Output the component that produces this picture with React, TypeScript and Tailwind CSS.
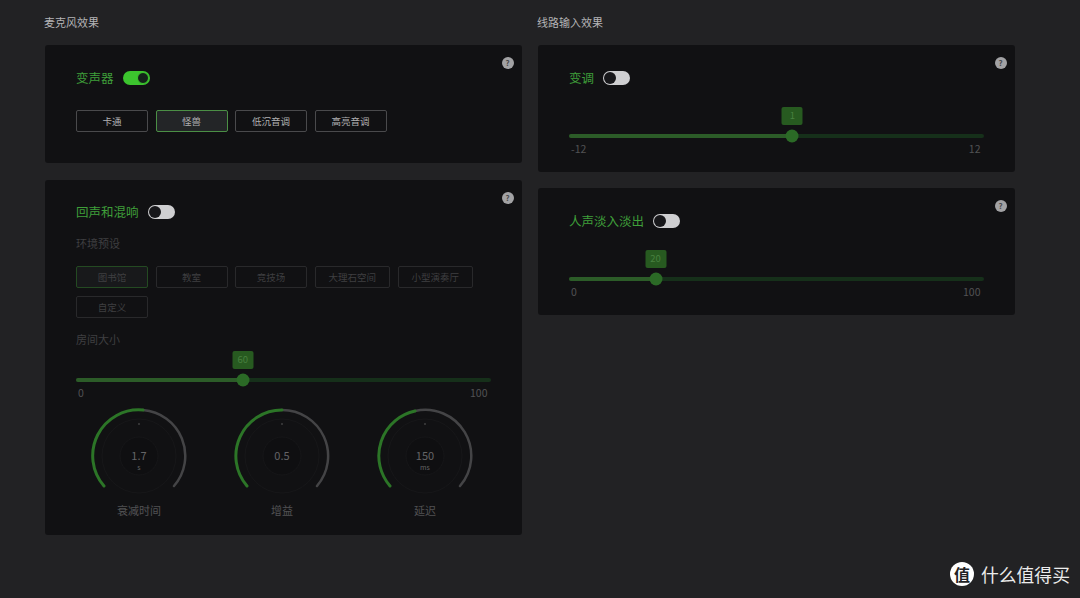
import type { ReactNode } from 'react'

const FONT = 'font-["Noto_Sans_CJK_SC","Noto_Sans",sans-serif]'

function Help() {
  return (
    <span className="absolute right-[8px] top-[12px] flex h-[12px] w-[12px] items-center justify-center rounded-full bg-[#a2a2a4] text-[8px] font-bold leading-none text-[#4a4a4c]">
      ?
    </span>
  )
}

function Toggle({ on = false }: { on?: boolean }) {
  if (on) {
    return (
      <span className="flex h-[14px] w-[27px] items-center justify-end rounded-full bg-[#3cc42e] pr-px">
        <span className="h-[12px] w-[12px] rounded-full border border-[#3cc42e] bg-[#14231a]" />
      </span>
    )
  }
  return (
    <span className="flex h-[14px] w-[27px] items-center rounded-full bg-[#cfcfd1] pl-px">
      <span className="h-[12px] w-[12px] rounded-full bg-[#17171a]" />
    </span>
  )
}

function Title({ text, on }: { text: string; on?: boolean }) {
  return (
    <div className="flex h-[14px] items-center gap-[9px]">
      <span className="text-[12.5px] leading-[14px] text-[#3f9f3a]">{text}</span>
      <Toggle on={on} />
    </div>
  )
}

function Card({ children }: { children: ReactNode }) {
  return <div className="relative rounded-[3px] bg-[#111113] pl-[31.5px] pr-[31px]">{children}</div>
}

function Slider({ value, pct, min, max }: { value: string; pct: number; min: string; max: string }) {
  // the thumb stays inside the track, so its centre runs over width - 14px
  const center = `calc((100% - 14px) * ${pct / 100} + 6.5px)`
  return (
    <div>
      <div className="relative h-[18px]">
        <span
          className="absolute top-0 flex h-[18px] w-[21px] -translate-x-1/2 items-center justify-center rounded-[2px] bg-[#275a20] text-[9.5px] leading-none text-[#47803f]"
          style={{ left: center }}
        >
          {value}
        </span>
      </div>
      <div className="relative mt-[9px] h-[4px] rounded-full bg-[#16301a]">
        <div className="h-full rounded-full bg-[#2c5c28]" style={{ width: center }} />
        <span
          className="absolute top-1/2 h-[13px] w-[13px] -translate-x-1/2 -translate-y-1/2 rounded-full bg-[#2b6a26]"
          style={{ left: center }}
        />
      </div>
      <div className="mt-[5px] flex h-[12px] items-center justify-between pl-[2px] pr-[3px] text-[10.5px] leading-[12px] text-[#525254]">
        <span>{min}</span>
        <span>{max}</span>
      </div>
    </div>
  )
}

function Knob({ value, unit, label, endX, endY }: { value: string; unit?: string; label: string; endX: number; endY: number }) {
  return (
    <div className="relative w-[96px]">
      <svg viewBox="0 0 96 96" className="block h-[96px] w-[96px]" fill="none">
        <circle cx="48" cy="48" r="37" stroke="#171719" strokeWidth="1" />
        <circle cx="48" cy="48" r="19" fill="#0f0f11" stroke="#161618" strokeWidth="1" />
        <path d={`M${endX} ${endY} A46 46 0 0 1 83 78`} stroke="#444446" strokeWidth="2.5" strokeLinecap="round" />
        <path d={`M13 78 A46 46 0 0 1 ${endX} ${endY}`} stroke="#2c7527" strokeWidth="3" strokeLinecap="round" />
        <circle cx="48" cy="16" r="1" fill="#3f3f41" />
      </svg>
      <div className="absolute inset-x-0 top-[41px] flex flex-col items-center gap-[2px] text-[#646466]">
        <div className="h-[12px] text-[11px] leading-[12px]">{value}</div>
        {unit && <div className="h-[8px] text-[7px] leading-[8px]">{unit}</div>}
      </div>
      <div className="h-[12px] text-center text-[11px] leading-[12px] text-[#525254]">{label}</div>
    </div>
  )
}

const MODES = ['卡通', '怪兽', '低沉音调', '高亮音调']
const ROOMS = ['图书馆', '教室', '竞技场', '大理石空间', '小型演奏厅', '自定义']

export default function App() {
  return (
    <div className={`relative flex h-[598px] w-[1080px] gap-[16px] overflow-hidden bg-[#222224] pl-[44.5px] pt-[16px] ${FONT}`}>
      <div className="w-[477px]">
        <h2 className="-ml-[0.5px] h-[12px] text-[11px] font-normal leading-[12px] text-[#b4b4b6]">麦克风效果</h2>
        <div className="mt-[17px] flex flex-col gap-[17px]">
          <Card>
            <Help />
            <div className="pb-[31px] pt-[26px]">
              <Title text="变声器" on />
              <div className="mt-[25px] flex gap-[7.5px]">
                {MODES.map(m => (
                  <span
                    key={m}
                    className={`flex h-[22px] w-[72px] items-center justify-center rounded-[2px] border text-[9.5px] text-[#b0b0b2] ${m === '怪兽' ? 'border-[#4b8f45] bg-[#232527]' : 'border-[#4a4a4c]'}`}
                  >
                    {m}
                  </span>
                ))}
              </div>
            </div>
          </Card>
          <Card>
            <Help />
            <div className="pb-[19px] pt-[25px]">
              <Title text="回声和混响" />
              <div className="mt-[18px] h-[12px] text-[11px] leading-[12px] text-[#3f3f41]">环境预设</div>
              <div className="mt-[17px] flex flex-wrap gap-x-[7.5px] gap-y-[8px]">
                {ROOMS.map((r, i) => (
                  <span
                    key={r}
                    className={`flex h-[22px] min-w-[72px] items-center justify-center rounded-[2px] border px-[13px] text-[9.5px] text-[#3f3f41] ${i === 0 ? 'border-[#244a22] bg-[#18191b]' : 'border-[#29292b]'}`}
                  >
                    {r}
                  </span>
                ))}
              </div>
              <div className="mt-[15px] h-[12px] text-[11px] leading-[12px] text-[#3f3f41]">房间大小</div>
              <div className="mt-[6px]">
                <Slider value="60" pct={40} min="0" max="100" />
              </div>
              <div className="mt-[9px] flex gap-[47px] pl-[15px]">
                <Knob value="1.7" unit="s" label="衰减时间" endX={52} endY={2} />
                <Knob value="0.5" label="增益" endX={48} endY={2} />
                <Knob value="150" unit="ms" label="延迟" endX={38} endY={3} />
              </div>
            </div>
          </Card>
        </div>
      </div>

      <div className="w-[477px]">
        <h2 className="-ml-[0.5px] h-[12px] text-[11px] font-normal leading-[12px] text-[#b4b4b6]">线路输入效果</h2>
        <div className="mt-[17px] flex flex-col gap-[16px]">
          <Card>
            <Help />
            <div className="pb-[17px] pt-[26px]">
              <Title text="变调" />
              <div className="mt-[22px]">
                <Slider value="1" pct={54.17} min="-12" max="12" />
              </div>
            </div>
          </Card>
          <Card>
            <Help />
            <div className="pb-[17px] pt-[26px]">
              <Title text="人声淡入淡出" />
              <div className="mt-[22px]">
                <Slider value="20" pct={20} min="0" max="100" />
              </div>
            </div>
          </Card>
        </div>
      </div>

      <div className="absolute left-[950px] top-[562px] flex h-[24px] items-center gap-[7px]">
        <span className="flex h-[24px] w-[24px] items-center justify-center rounded-full bg-white text-[16px] font-bold leading-none text-[#222224]">值</span>
        <span className="text-[17.8px] leading-[24px] text-[#ececec]">什么值得买</span>
      </div>
    </div>
  )
}
